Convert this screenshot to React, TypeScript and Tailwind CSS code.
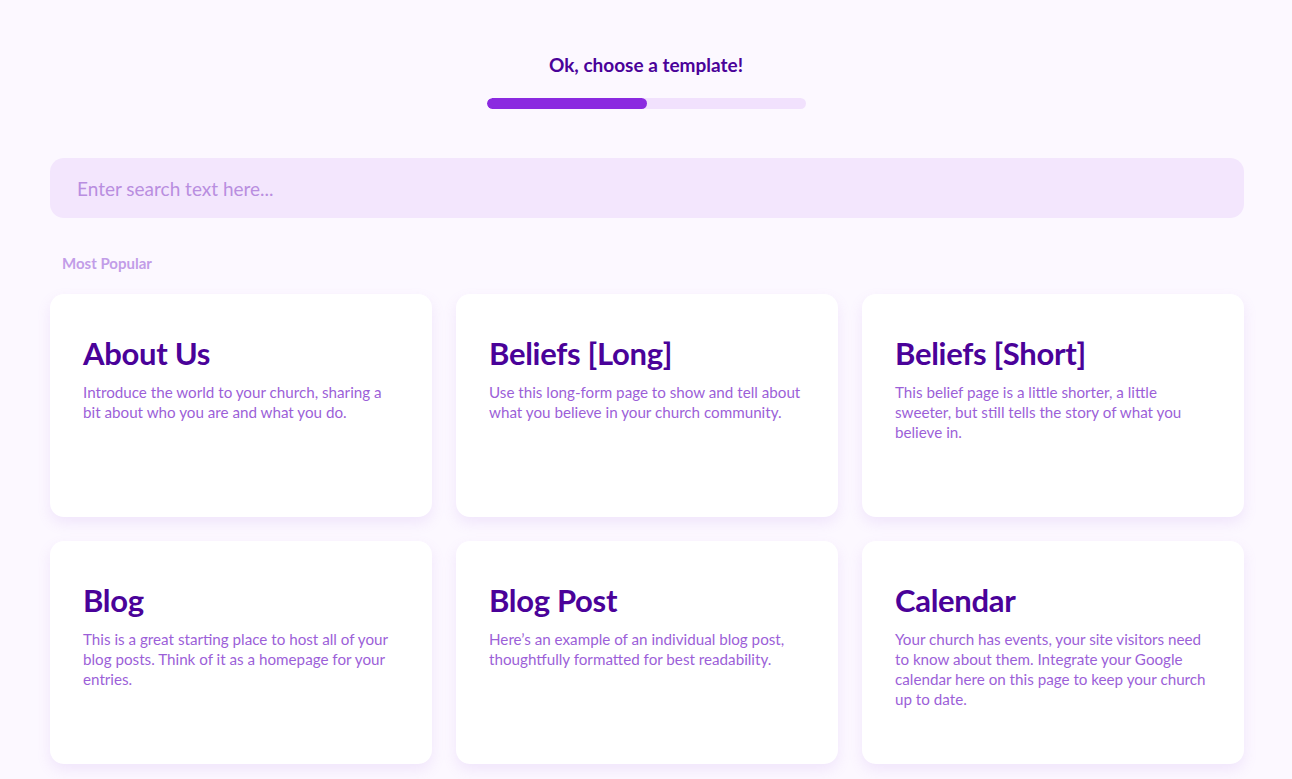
const templates = [
  {
    title: 'About Us',
    text: 'Introduce the world to your church, sharing a bit about who you are and what you do.',
  },
  {
    title: 'Beliefs [Long]',
    text: 'Use this long-form page to show and tell about what you believe in your church community.',
  },
  {
    title: 'Beliefs [Short]',
    text: 'This belief page is a little shorter, a little sweeter, but still tells the story of what you believe in.',
  },
  {
    title: 'Blog',
    text: 'This is a great starting place to host all of your blog posts. Think of it as a homepage for your entries.',
  },
  {
    title: 'Blog Post',
    text: 'Here\u2019s an example of an individual blog post, thoughtfully formatted for best readability.',
  },
  {
    title: 'Calendar',
    text: 'Your church has events, your site visitors need to know about them. Integrate your Google calendar here on this page to keep your church up to date.',
  },
]

function TemplateCard({ title, text }: { title: string; text: string }) {
  return (
    <div className="h-[223px] rounded-[14px] bg-white px-[33px] pt-[41px] shadow-[0_6px_14px_rgba(170,120,230,0.14)]">
      <h2 className="text-[31px] font-bold leading-[36px] tracking-[-0.3px] text-[#4a0299]">{title}</h2>
      <p className="mt-[11px] text-[15.2px] leading-[20px] text-[#9c5fd8]">{text}</p>
    </div>
  )
}

export default function App() {
  return (
    <div
      className="h-screen overflow-hidden bg-[#fcf8ff] px-[48px]"
      style={{ fontFamily: 'Lato, "Noto Sans", sans-serif' }}
    >
      <div className="flex flex-col items-center pt-[52px]">
        <h1 className="text-[19px] font-bold leading-[26px] text-[#4a0299]">Ok, choose a template!</h1>
        <div className="mt-[20px] h-[11px] w-[319px] overflow-hidden rounded-full bg-[#f1e1fd]">
          <div className="h-full w-[160px] rounded-full bg-[#8b2ae0]" />
        </div>
      </div>

      <input
        type="text"
        placeholder="Enter search text here..."
        className="mt-[49px] ml-[2px] block h-[60px] w-[1194px] rounded-[14px] bg-[#f3e6fd] px-[27px] text-[19px] text-[#4a0299] outline-none placeholder:text-[#b98ee0]"
      />

      <div className="mt-[34px] px-[14px] text-[15px] font-bold text-[#c29de8]">Most Popular</div>

      <div className="mt-[19px] ml-[2px] grid w-[1194px] grid-cols-3 gap-[24px]">
        {templates.map((t) => (
          <TemplateCard key={t.title} title={t.title} text={t.text} />
        ))}
      </div>
    </div>
  )
}
